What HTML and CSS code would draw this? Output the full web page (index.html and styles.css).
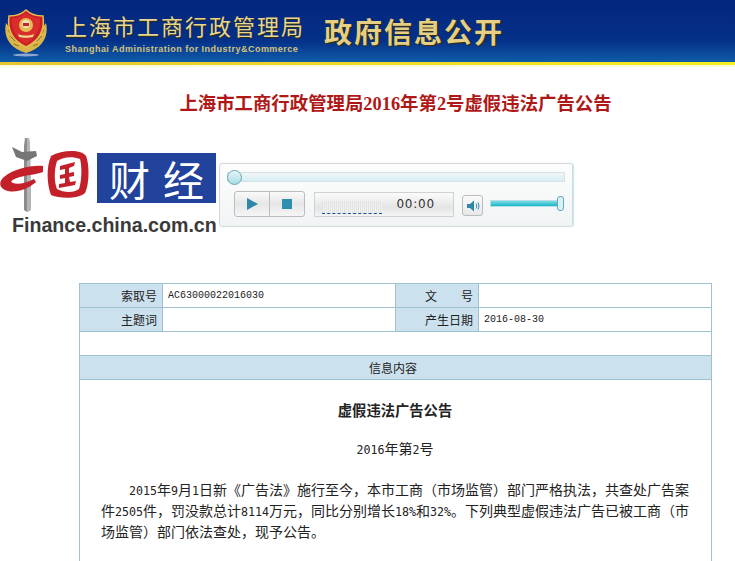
FILE: index.html
```html
<!DOCTYPE html>
<html lang="zh-CN">
<head>
  <meta charset="UTF-8" />
  <title>上海市工商行政管理局 - 政府信息公开</title>
  <link rel="stylesheet" href="styles.css">
</head>
<body>

  <div class="header">
    <svg class="badge" width="46" height="50" viewBox="0 0 46 50">
      <ellipse cx="22" cy="47" rx="13" ry="1.500" fill="#8fa6cf"/>
      <path d="M2 15C-1 28 5 40 22 45C39 40 45 28 42 15L38 20C38 30 30 36 22 38C14 36 6 30 6 20Z" fill="#d9b64a"/>
      <path d="M6 28L11 33M4 22L8 27M10 36L15 38M38 28L33 33M40 22L36 27M34 36L29 38" stroke="#8f6f1e" stroke-width="1"/>
      <path d="M22 2C26 6 33 8 39 8C41 22 35 33 22 39C9 33 3 22 5 8C11 8 18 6 22 2Z" fill="#c91f28" stroke="#e6bd4e" stroke-width="1.500"/>
      <path d="M22 5C26 8 31 10 36 10C37 21 32 30 22 36C12 30 7 21 8 10C13 10 18 8 22 5Z" fill="#d92c2c"/>
      <circle cx="22" cy="17" r="7" fill="#e6bd4e"/>
      <circle cx="22" cy="16" r="4" fill="#f0e2c0"/>
      <path d="M19 15H25V18H19Z" fill="#c91f28"/>
      <path d="M14 26C19 28 25 28 30 26L29 29C25 30 19 30 15 29Z" fill="#f0d98a"/>
    </svg>
    <div class="org">
      <div class="org-cn">上海市工商行政管理局</div>
      <div class="org-en">Shanghai Administration for Industry&amp;Commerce</div>
    </div>
    <div class="slogan">政府信息公开</div>
  </div>
  <div class="header-line"></div>

  <h1 class="page-title">上海市工商行政管理局2016年第2号虚假违法广告公告</h1>

  <div class="media">
    <div class="logo">
      <div class="logo-top">
        <svg class="logo-mark" width="97" height="76" viewBox="0 0 97 76">
          <path d="M25 0H29L30 8L31 72L27 74L24 72L24 8Z" fill="#8c8c8c"/>
          <path d="M27 0H29L30 8L31 72L27 74Z" fill="#b5b5b5"/>
          <path d="M12 9L22 14L36 13L37 18L27 23L16 19Z" fill="#767676"/>
          <path d="M43 28C30 27 14 31 4 39C-2 44 -1 51 8 53C17 55 28 51 36 44L34 41C26 45 18 47 13 45C10 44 11 42 17 40C25 37 35 37 43 34Z" fill="#c4202a"/>
          <path fill-rule="evenodd" d="M51 18C62 12 81 11 86 18C90 28 89 48 85 55C78 61 60 61 51 57C47 46 46 30 51 18ZM57 23C54 32 54 44 57 51C64 55 74 55 79 51C82 42 82 28 80 21C72 18 63 19 57 23Z" fill="#c4202a"/>
          <path d="M60 28L75 24L74 28L69 30L69 35L74 34L74 38L69 39L70 44L76 43L75 47L59 50L59 46L65 45L65 40L60 41L60 37L65 36L65 31L60 32Z" fill="#c4202a"/>
        </svg>
        <div class="logo-box">财 经</div>
      </div>
      <div class="logo-url">Finance.china.com.cn</div>
    </div>

    <div class="player">
      <div class="seek">
        <span class="seek-knob"></span>
      </div>
      <div class="controls">
        <div class="btn-group">
          <div class="ctl-btn"><span class="play-icon"></span></div>
          <div class="ctl-btn"><span class="stop-icon"></span></div>
        </div>
        <div class="screen">
          <div class="meter"></div>
          <div class="time">00:00</div>
        </div>
        <div class="vol-btn">
          <svg width="14" height="14" viewBox="0 0 14 14">
            <path d="M1 5H4L8 1.500V12.500L4 9H1Z" fill="#2f86a8"/>
            <path d="M10 4.500C11 6 11 8 10 9.500M12 3.500C13.200 5.500 13.200 8.500 12 10.500" fill="none" stroke="#2f86a8" stroke-width="1"/>
          </svg>
        </div>
        <div class="vol-bar"><span class="vol-knob"></span></div>
      </div>
    </div>
  </div>

  <div class="info">
    <table class="info-table">
      <colgroup>
        <col class="col-label">
        <col class="col-value">
        <col class="col-label2">
        <col>
      </colgroup>
      <tr>
        <th>索取号</th>
        <td class="mono">AC63000022016030</td>
        <th>文　　号</th>
        <td></td>
      </tr>
      <tr>
        <th>主题词</th>
        <td></td>
        <th>产生日期</th>
        <td class="mono">2016-08-30</td>
      </tr>
      <tr>
        <td colspan="4" class="blank"></td>
      </tr>
      <tr>
        <th colspan="4" class="section">信息内容</th>
      </tr>
      <tr>
        <td colspan="4" class="content">
          <h2 class="doc-title">虚假违法广告公告</h2>
          <p class="doc-no"><span class="num">2016</span>年第<span class="num">2</span>号</p>
          <p class="doc-text"><span class="num">2015</span>年<span class="num">9</span>月<span class="num">1</span>日新《广告法》施行至今，本市工商（市场监管）部门严格执法，共查处广告案件<span class="num">2505</span>件，罚没款总计<span class="num">8114</span>万元，同比分别增长<span class="num">18%</span>和<span class="num">32%</span>。下列典型虚假违法广告已被工商（市场监管）部门依法查处，现予公告。</p>
        </td>
      </tr>
    </table>
  </div>

</body>
</html>
```

FILE: styles.css
```css
html, body {
  height: 561px;
  overflow: hidden;
}
body {
  margin: 0;
  padding: 0;
  background-color: #fff;
  color: #222;
  font-family: "Liberation Sans", "Noto Sans CJK SC", sans-serif;
}

/* 头部 */
.header {
  display: flex;
  align-items: flex-start;
  height: 62px;
  background: linear-gradient(to bottom, #04267c 0%, #043088 65%, #0f5ca8 100%);
  overflow: hidden;
}
.badge {
  flex: none;
  margin: 8px 0 0 4px;
}
.org {
  flex: none;
  margin: 13px 0 0 15px;
  width: 260px;
}
.org-cn {
  font-family: "Noto Sans CJK SC", sans-serif;
  font-size: 22px;
  line-height: 24px;
  letter-spacing: 2px;
  color: #e9d68f;
  text-shadow: 0 1px 1px #3a3000;
  white-space: nowrap;
}
.org-en {
  margin-top: 7px;
  font-size: 9px;
  font-weight: bold;
  line-height: 11px;
  letter-spacing: .48px;
  color: #d6c27c;
  white-space: nowrap;
}
.slogan {
  margin: 12px 0 0 -1px;
  font-family: "Noto Sans CJK SC", sans-serif;
  font-size: 28px;
  font-weight: bold;
  line-height: 38px;
  letter-spacing: 2px;
  color: #e6ce85;
  text-shadow: 1px 1px 1px #3a3000;
  white-space: nowrap;
}
.header-line {
  height: 3px;
  background: linear-gradient(to right, #e8c430, #f8ee20);
  border-bottom: 2px solid #fdfbd8;
}

.page-title {
  margin: 26px 0 0;
  padding-left: 56px;
  height: 27px;
  font-family: "Liberation Serif", "Noto Sans CJK SC", serif;
  font-size: 18.4px;
  line-height: 22px;
  font-weight: bold;
  text-align: center;
  color: #b01818;
}

/* 标志和播放器 */
.media {
  display: flex;
  align-items: flex-start;
  margin-top: 18px;
  height: 145px;
}
.logo {
  flex: none;
  width: 219px;
}
.logo-top {
  display: flex;
  align-items: flex-start;
  height: 78px;
}
.logo-mark {
  flex: none;
}
.logo-box {
  flex: none;
  width: 119px;
  height: 50px;
  margin-top: 15px;
  background-color: #21439b;
  color: #fff;
  font-family: "Noto Sans CJK SC", sans-serif;
  font-size: 41px;
  line-height: 50px;
  word-spacing: 4px;
  text-align: center;
  white-space: nowrap;
}
.logo-url {
  margin: -1px 0 0 12px;
  font-size: 19.6px;
  font-weight: bold;
  line-height: 20px;
  color: #3a3a3a;
  white-space: nowrap;
}

.player {
  flex: none;
  box-sizing: border-box;
  width: 354px;
  height: 64px;
  margin-top: 25px;
  padding: 8px 7px 0;
  background: linear-gradient(to bottom, #fdfdfd, #f1f4f5);
  border: 1px solid #d4d8da;
  border-radius: 3px;
  box-shadow: 1px 0 1px #bfe9ee;
}
.seek {
  position: relative;
  height: 8px;
  background: linear-gradient(to bottom, #f2f6f7, #d6eef3);
  border: 1px solid #d6dfe2;
}
.seek-knob {
  position: absolute;
  left: -1px;
  top: -3px;
  box-sizing: border-box;
  width: 15px;
  height: 15px;
  border-radius: 50%;
  border: 1px solid #6aa6b8;
  background: linear-gradient(to bottom, #e6f5f8, #a8dde6);
}
.controls {
  display: flex;
  align-items: flex-start;
  margin-top: 9px;
}
.btn-group {
  display: flex;
  flex: none;
  box-sizing: border-box;
  width: 71px;
  height: 26px;
  margin-left: 7px;
  border: 1px solid #b9bdbf;
  border-radius: 3px;
  background: linear-gradient(to bottom, #fafafa, #e6e6e6 50%, #f6f6f6);
}
.ctl-btn {
  flex: 1;
  display: flex;
  align-items: center;
  justify-content: center;
}
.ctl-btn + .ctl-btn {
  border-left: 1px solid #b9bdbf;
}
.play-icon {
  width: 0;
  height: 0;
  border-left: 11px solid #2f86a8;
  border-top: 6px solid transparent;
  border-bottom: 6px solid transparent;
}
.stop-icon {
  width: 10px;
  height: 10px;
  background-color: #2f8fae;
}
.screen {
  position: relative;
  flex: none;
  box-sizing: border-box;
  width: 140px;
  height: 25px;
  margin: 1px 0 0 9px;
  border: 1px solid #cfd1d2;
  background: linear-gradient(to bottom, #fbfbfb, #e4e4e4 65%, #f4f4f4);
}
.meter {
  position: absolute;
  left: 7px;
  bottom: 2px;
  width: 60px;
  height: 12px;
  border-bottom: 1px dashed #1f4f9a;
  background: repeating-linear-gradient(to right, #e2e2e2 0 1px, #f2f2f2 1px 2px);
}
.time {
  position: absolute;
  right: 18px;
  top: 4px;
  font-family: "DejaVu Sans", sans-serif;
  font-size: 12px;
  line-height: 15px;
  letter-spacing: .8px;
  color: #333;
}
.vol-btn {
  display: flex;
  flex: none;
  align-items: center;
  justify-content: center;
  box-sizing: border-box;
  width: 21px;
  height: 21px;
  margin: 4px 0 0 8px;
  border: 1px solid #b9bdbf;
  border-radius: 3px;
  background: linear-gradient(to bottom, #fafafa, #e8e8e8);
}
.vol-bar {
  position: relative;
  flex: none;
  width: 73px;
  height: 7px;
  margin: 9px 0 0 7px;
  background: linear-gradient(to bottom, #7fdbe4, #17b6c8);
  border: 1px solid #b8dfe5;
  box-sizing: border-box;
}
.vol-knob {
  position: absolute;
  right: -2px;
  top: -5px;
  box-sizing: border-box;
  width: 7px;
  height: 15px;
  border-radius: 3px;
  border: 1px solid #6aa6b8;
  background-color: #d6f2f5;
}

/* 信息表格 */
.info {
  margin-left: 79px;
  width: 633px;
}
.info-table {
  width: 633px;
  table-layout: fixed;
  border-collapse: collapse;
  font-family: "Noto Sans CJK SC", sans-serif;
  font-size: 12px;
  color: #222;
}
.col-label { width: 83px; }
.col-value { width: 233px; }
.col-label2 { width: 83px; }
.info-table th,
.info-table td {
  box-sizing: border-box;
  height: 24px;
  padding: 0 5px;
  border: 1px solid #9fc0cf;
  font-weight: normal;
  line-height: 16px;
}
.info-table th {
  background-color: #cce1ee;
  text-align: right;
  padding-right: 5px;
}
.info-table .mono {
  font-family: "Liberation Mono", monospace;
  font-size: 10px;
}
.info-table .section {
  padding-right: 10px;
  text-align: center;
}
.info-table .content {
  height: auto;
  padding: 0 22px 0 21px;
  border-bottom: none;
  vertical-align: top;
  color: #222;
}
.num {
  font-family: "DejaVu Sans Mono", monospace;
  font-size: 11.63px;
  line-height: 1;
}
.doc-title {
  margin: 18px 0 0;
  font-size: 14.3px;
  line-height: 24px;
  text-align: center;
}
.doc-no {
  margin: 14px 0 0;
  font-size: 14px;
  line-height: 24px;
  text-align: center;
}
.doc-text {
  margin: 19px 0 0;
  padding-bottom: 19px;
  font-size: 14px;
  line-height: 21px;
  text-indent: 2em;
}
```
